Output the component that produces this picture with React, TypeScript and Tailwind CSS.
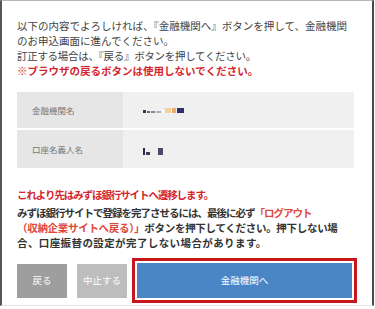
import React from 'react';

const font = { fontFamily: '"Noto Sans CJK JP", "Noto Sans", sans-serif' };

// 口座情報（モザイク済み）
function Mosaic({ blocks }: { blocks: { w: number; h: number; c: string }[] }) {
    return (
        <div className="flex items-end gap-[1px]">
            {blocks.map((b, i) => (
                <div key={i} style={{ width: b.w, height: b.h, background: b.c }} />
            ))}
        </div>
    );
}

export default function App() {
    return (
        <div className="w-[375px] h-[309px] bg-white overflow-hidden" style={font}>
            <div className="w-[374px] h-[306px] border-l-2 border-r-2 border-l-[#555555] border-r-[#4a4a4a] border-t border-t-[#b5b5b5] border-b border-b-[#e2e2e2] pl-[15px] pr-[14px] pt-[17px] text-[10.5px] leading-[15px] text-[#444444]">
                {/* 案内文 */}
                <p className="whitespace-nowrap">
                    以下の内容でよろしければ、『金融機関へ』ボタンを押して、金融機関<br />
                    のお申込画面に進んでください。<br />
                    <span className="tracking-[-0.3px]">訂正する場合は、『戻る』ボタンを押してください。</span><br />
                    <span className="font-bold text-[#d5262e]">※ブラウザの戻るボタンは使用しないでください。</span>
                </p>

                {/* 確認テーブル */}
                <div className="mt-[14px] w-[337px] flex flex-col gap-[2px]">
                    <div className="flex h-[36px]">
                        <div className="w-[106px] bg-[#e6e6e6] flex items-center pl-[15px] text-[8.5px] text-[#777777]">金融機関名</div>
                        <div className="flex-1 bg-[#f0f0f0] flex items-center pl-[20px]">
                            <Mosaic blocks={[
                                { w: 3, h: 3, c: '#3a3550' },
                                { w: 3, h: 2, c: '#6b6570' },
                                { w: 4, h: 2, c: '#8a8490' },
                                { w: 5, h: 2, c: '#b5b0b8' },
                                { w: 2, h: 3, c: '#ffffff' },
                                { w: 6, h: 5, c: '#f6d09c' },
                                { w: 4, h: 5, c: '#e8b070' },
                                { w: 7, h: 5, c: '#2e2f6a' },
                            ]} />
                        </div>
                    </div>
                    <div className="flex h-[38px]">
                        <div className="w-[106px] bg-[#e6e6e6] flex items-center pl-[15px] text-[8.5px] text-[#777777]">口座名義人名</div>
                        <div className="flex-1 bg-[#f0f0f0] flex items-center pl-[20px] pt-[4px]">
                            <Mosaic blocks={[
                                { w: 2, h: 7, c: '#2a2a40' },
                                { w: 4, h: 3, c: '#3a3a55' },
                                { w: 6, h: 2, c: '#f0f0f0' },
                                { w: 5, h: 7, c: '#4a4a66' },
                            ]} />
                        </div>
                    </div>
                </div>

                {/* 注意事項 */}
                <p className="mt-[19px] font-bold text-[#d5262e] whitespace-nowrap tracking-[-1.1px]">これより先はみずほ銀行サイトへ遷移します。</p>
                <p className="mt-[3px] font-bold text-[#333333] whitespace-nowrap">
                    <span className="tracking-[-1px]">みずほ銀行サイトで登録を完了させるには、最後に必ず<span className="text-[#e0473c]">「ログアウト</span></span><br />
                    <span className="tracking-[-0.3px]"><span className="text-[#e0473c]">（収納企業サイトへ戻る）」</span>ボタンを押下してください。押下しない場</span><br />
                    <span className="tracking-[0.4px]">合、口座振替の設定が完了しない場合があります。</span>
                </p>

                {/* ボタン */}
                <div className="mt-[8px] flex items-center">
                    <button className="w-[50px] h-[34px] bg-[#9e9e9e] text-white text-[9.5px]">戻る</button>
                    <button className="ml-[10px] w-[50px] h-[34px] bg-[#bdbdbd] text-white text-[9.5px]">中止する</button>
                    <div className="ml-[5px] border-[3px] border-[#c8161e] p-[2px]">
                        <button className="w-[215px] h-[35px] bg-[#4a86c6] text-white text-[9.5px] block">金融機関へ</button>
                    </div>
                </div>
            </div>
        </div>
    );
}
